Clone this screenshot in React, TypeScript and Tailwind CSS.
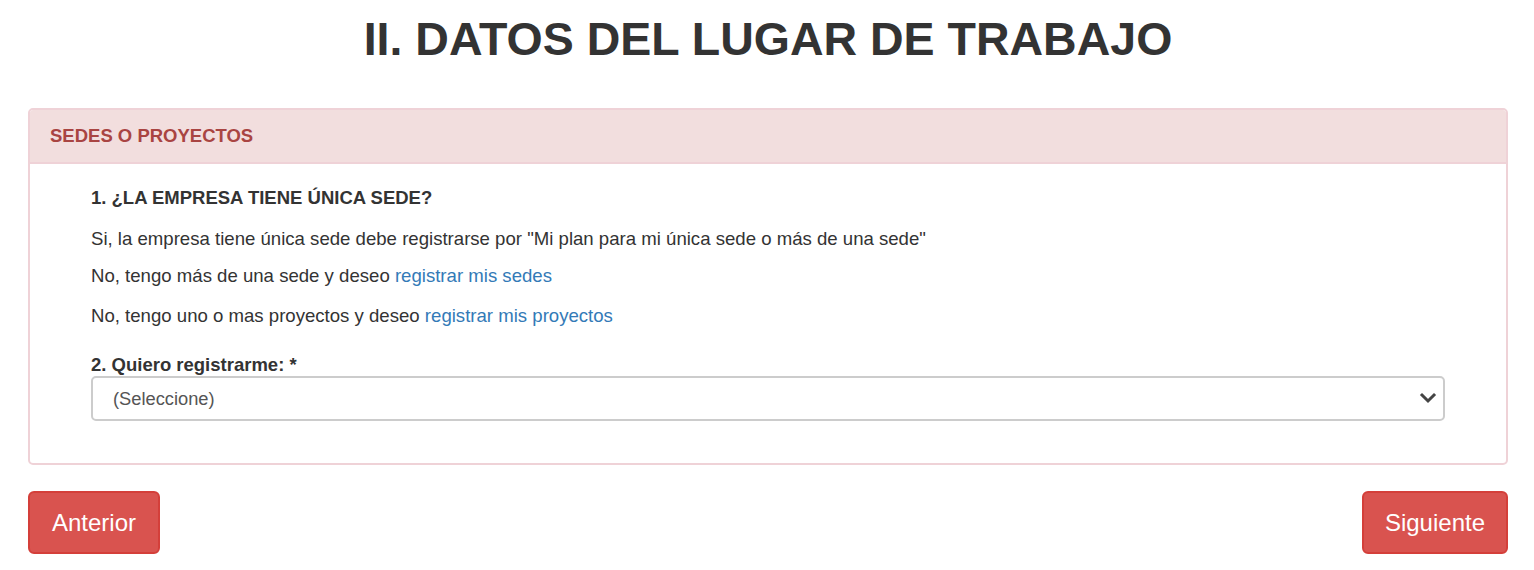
export default function App() {
  return (
    <div className="min-h-screen bg-white font-['Liberation_Sans',Arial,sans-serif] text-[#333]">
      <div className="pl-[28px] pr-[26px] pt-[10px]">
        <h1 className="text-center text-[46.5px] font-bold leading-[58px] text-[#333]">II. DATOS DEL LUGAR DE TRABAJO</h1>

        <div className="mt-[40px] rounded-[5px] border-2 border-[#efd2d7] bg-white">
          <div className="flex h-[54px] items-center rounded-t-[3px] border-b-2 border-[#efd2d7] bg-[#f2dede] px-[20px]">
            <h3 className="text-[18.5px] font-bold text-[#a94442]">SEDES O PROYECTOS</h3>
          </div>

          <div className="px-[61px] pb-[42px] pt-[22px]">
            <p className="text-[18.5px] font-bold leading-[24px]">1. ¿LA EMPRESA TIENE ÚNICA SEDE?</p>
            <p className="mt-[17px] text-[18.6px] leading-[24px]">
              Si, la empresa tiene única sede debe registrarse por "Mi plan para mi única sede o más de una sede"
            </p>
            <p className="mt-[13px] text-[18.6px] leading-[24px]">
              No, tengo más de una sede y deseo <a className="text-[#337ab7]">registrar mis sedes</a>
            </p>
            <p className="mt-[16px] text-[18.6px] leading-[24px]">
              No, tengo uno o mas proyectos y deseo <a className="text-[#337ab7]">registrar mis proyectos</a>
            </p>

            <label className="mt-[25px] block text-[18.5px] font-bold leading-[24px]">2. Quiero registrarme: *</label>
            <div className="relative mt-[-1px]">
              <div className="flex h-[45px] items-center rounded-[5px] border-2 border-[#ccc] bg-white px-[20px] text-[18.3px] text-[#555]">
                (Seleccione)
              </div>
              <svg className="absolute right-[8px] top-[14px] h-[16px] w-[18px]" viewBox="0 0 18 16" fill="none">
                <path d="M3 5l6 6 6-6" stroke="#444" strokeWidth="3" strokeLinecap="square" />
              </svg>
            </div>
          </div>
        </div>

        <div className="mt-[26px] flex justify-between">
          <button className="h-[63px] rounded-[6px] border-2 border-[#d43f3a] bg-[#d9534f] px-[22px] text-[24px] text-white">Anterior</button>
          <button className="h-[63px] rounded-[6px] border-2 border-[#d43f3a] bg-[#d9534f] px-[21px] text-[24px] text-white">Siguiente</button>
        </div>
      </div>
    </div>
  );
}
